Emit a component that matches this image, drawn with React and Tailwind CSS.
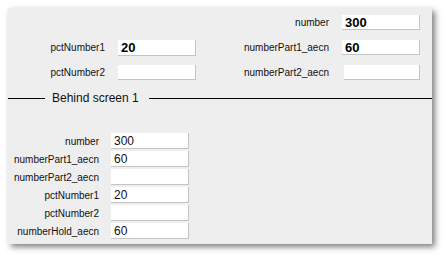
import React from 'react';

const font = { fontFamily: '"Liberation Sans", Arial, sans-serif' };

function Field({ value, bold }) {
  return (
    <div className="h-full bg-white border-r border-b border-[#c4c4c4] flex items-center pl-[3px]">
      <span className={bold ? 'text-[13px] font-bold text-black leading-none' : 'text-[12px] text-[#111] leading-none'}>{value}</span>
    </div>
  );
}

const bottomRows = [
  ['number', '300'],
  ['numberPart1_aecn', '60'],
  ['numberPart2_aecn', ''],
  ['pctNumber1', '20'],
  ['pctNumber2', ''],
  ['numberHold_aecn', '60'],
];

export default function App() {
  return (
    <div className="w-[446px] h-[258px] bg-white pt-[8px] pl-[8px]" style={font}>
      <div className="w-[424px] h-[236px] bg-[#eeeeee] shadow-[3px_3px_6px_rgba(0,0,0,0.5)]">
        {/* top block */}
        <div className="pt-[7px] grid grid-cols-[97px_78px_120px_78px] gap-x-[13px] grid-rows-[15px_15px_15px] gap-y-[10px] text-[10px] text-[#111]">
          <div />
          <div />
          <div className="flex items-center justify-end">number</div>
          <Field value="300" bold />

          <div className="flex items-center justify-end">pctNumber1</div>
          <div className="h-[16px]"><Field value="20" bold /></div>
          <div className="flex items-center justify-end">numberPart1_aecn</div>
          <Field value="60" bold />

          <div className="flex items-center justify-end">pctNumber2</div>
          <Field value="" />
          <div className="flex items-center justify-end">numberPart2_aecn</div>
          <div className="pl-[2px]"><Field value="" /></div>
        </div>

        {/* separator */}
        <div className="mt-[11px] flex items-center h-[14px]">
          <div className="w-[37px] h-px bg-black" />
          <span className="ml-[7px] mr-[10px] text-[12px] text-[#111] leading-none">Behind screen 1</span>
          <div className="flex-1 h-px bg-black" />
        </div>

        {/* bottom block */}
        <div className="mt-[28px] flex flex-col gap-[2px] text-[10px] text-[#111]">
          {bottomRows.map(([label, value], i) => (
            <div key={i} className="flex h-[16px]">
              <div className="w-[91px] flex items-center justify-end">{label}</div>
              <div className="ml-[12px] w-[78px]"><Field value={value} /></div>
            </div>
          ))}
        </div>
      </div>
    </div>
  );
}
